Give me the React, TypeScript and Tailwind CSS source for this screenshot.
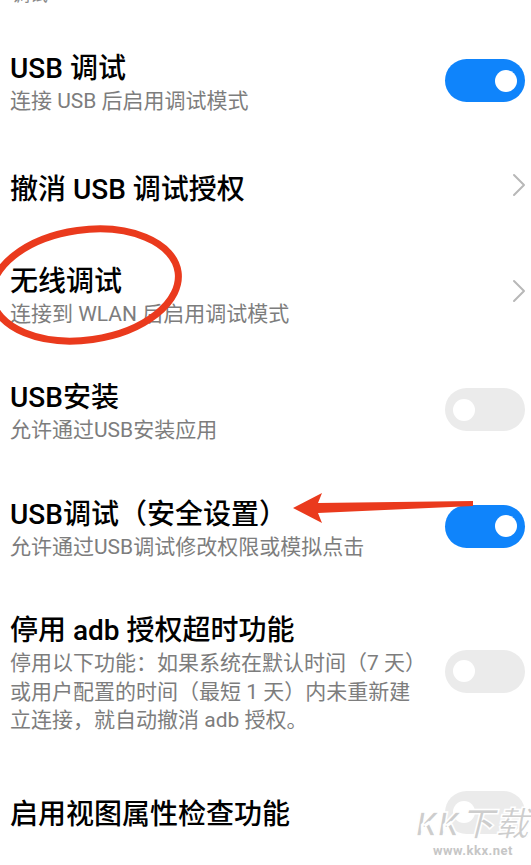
import type { ReactNode } from 'react';

const FONT = { fontFamily: 'Roboto, "Noto Sans CJK SC", "Noto Sans", sans-serif' };

function Toggle({ on }: { on?: boolean }) {
  return (
    <div
      className={`mb-[5px] flex h-[43px] w-[80px] shrink-0 items-center rounded-full px-[8px] ${
        on ? 'justify-end bg-[#0f84fb]' : 'justify-start bg-[#ebebeb]'
      }`}
    >
      <div className="h-[22px] w-[22px] rounded-full bg-white" />
    </div>
  );
}

function Chevron() {
  return (
    <svg className="mb-[10px] mr-[-1px] shrink-0" width="14" height="24" viewBox="0 0 14 24" fill="none">
      <path d="M2 2 L12 12 L2 22" stroke="#b8b8b8" strokeWidth="2" strokeLinecap="round" strokeLinejoin="round" />
    </svg>
  );
}

function Row({
  title,
  sub,
  right,
  single,
}: {
  title: string;
  sub?: ReactNode;
  right: ReactNode;
  single?: boolean;
}) {
  return (
    <div className={`flex items-center gap-[6px] pl-[10px] pr-[6px] ${single ? 'py-[30px]' : 'py-[26px]'}`}>
      <div className="min-w-0 flex-1">
        <div className="whitespace-nowrap text-[28px] font-medium leading-[36px] text-black">{title}</div>
        {sub && <div className="whitespace-nowrap text-[21px] leading-[28.5px] text-[#7d7d7d]">{sub}</div>}
      </div>
      {right}
    </div>
  );
}

export default function App() {
  return (
    <div className="relative h-[865px] w-[531px] overflow-hidden bg-white" style={FONT}>
      {/* category header, mostly scrolled off */}
      <div className="-mt-[17px] mb-[18px] pl-[12px] text-[18px] leading-[24px] text-[#8a8a8a]">调试</div>

      <Row title="USB 调试" sub="连接 USB 后启用调试模式" right={<Toggle on />} />
      <Row title="撤消 USB 调试授权" right={<Chevron />} single />
      <Row title="无线调试" sub="连接到 WLAN 后启用调试模式" right={<Chevron />} />
      <Row title="USB安装" sub="允许通过USB安装应用" right={<Toggle />} />
      <Row title="USB调试（安全设置）" sub="允许通过USB调试修改权限或模拟点击" right={<Toggle on />} />
      <Row
        title="停用 adb 授权超时功能"
        sub={
          <>
            停用以下功能：如果系统在默认时间（7 天）
            <br />
            或用户配置的时间（最短 1 天）内未重新建
            <br />
            立连接，就自动撤消 adb 授权。
          </>
        }
        right={<Toggle />}
      />
      <Row title="启用视图属性检查功能" right={<Toggle />} single />

      {/* red annotations */}
      <svg className="pointer-events-none absolute left-0 top-0" width="531" height="865" viewBox="0 0 531 865">
        <ellipse
          cx="85"
          cy="285"
          rx="94"
          ry="55"
          transform="rotate(-8 85 285)"
          fill="none"
          stroke="#ea3a1d"
          strokeWidth="7"
        />
        <polygon points="293,508 322,493 318,503 473,501 473,506 318,513 322,523" fill="#ea3a1d" />
      </svg>

      {/* watermark */}
      <div className="pointer-events-none absolute left-[416px] top-[804px] flex flex-col items-center">
        <div
          className="text-[34px] font-bold italic leading-[40px] tracking-[1px] text-[#cdcdcd]"
          style={{ WebkitTextStroke: '1.5px #ffffff' }}
        >
          KK下载
        </div>
        <div className="-mt-[1px] text-[13px] font-bold leading-[16px] tracking-[0.5px] text-[#c6c6c6]">
          www.kkx.net
        </div>
      </div>
    </div>
  );
}
